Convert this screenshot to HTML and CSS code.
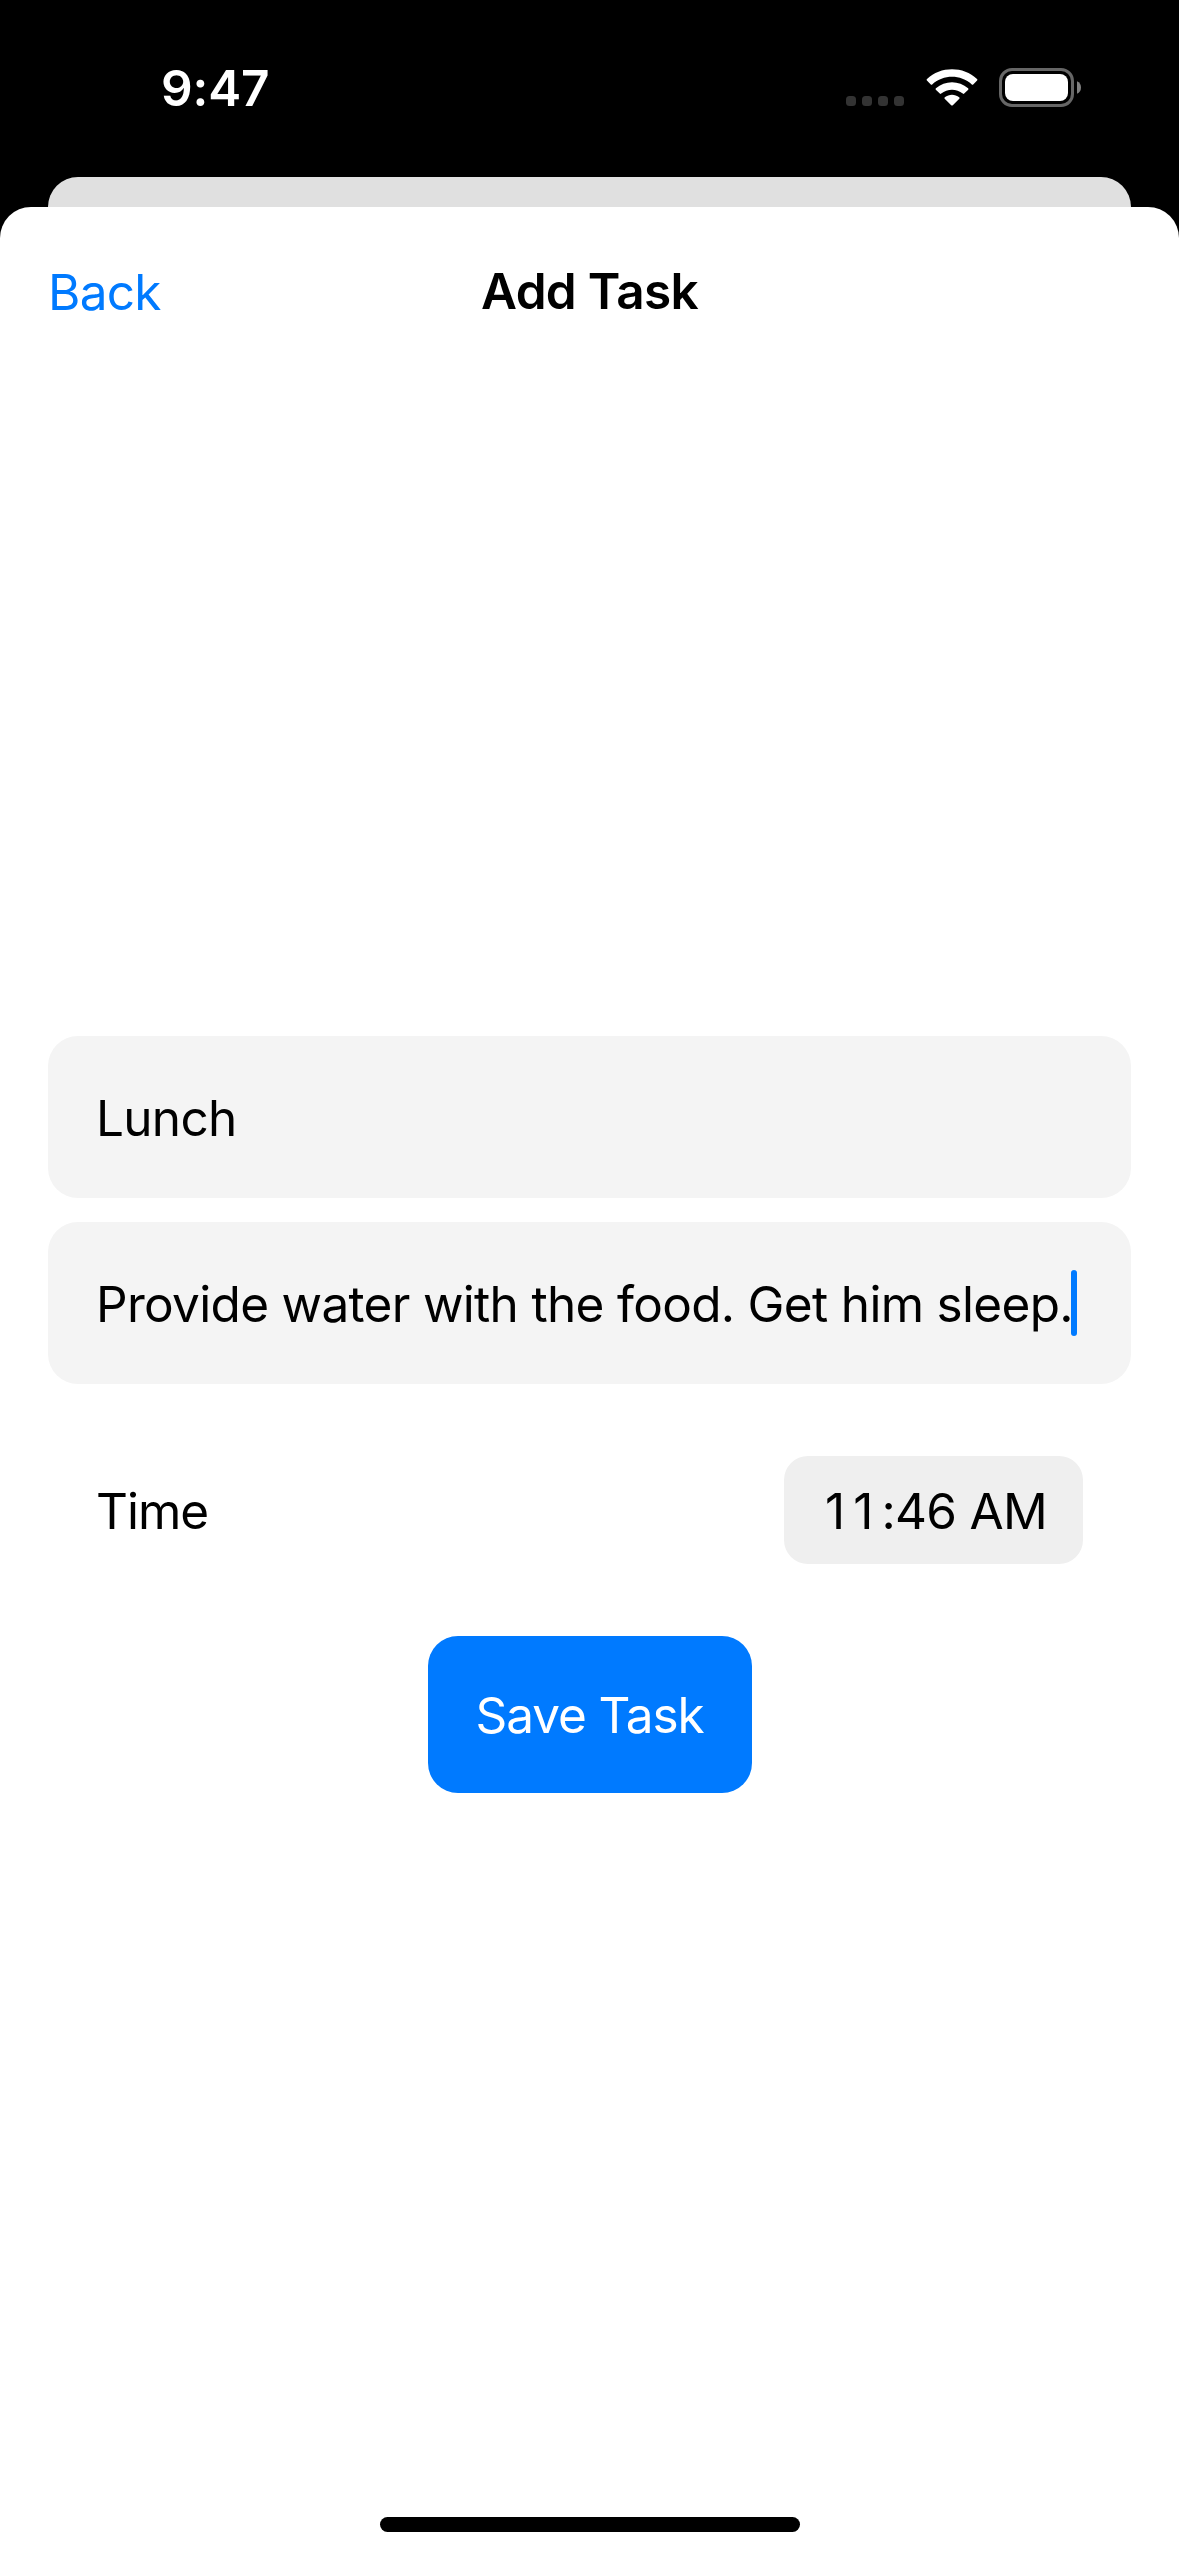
FILE: index.html
```html
<!DOCTYPE html>
<html lang="en">
<head>
<meta charset="utf-8">
<title>Add Task</title>
<link rel="stylesheet" href="styles.css">
</head>
<body>
<div class="screen">
  <header class="status-bar">
    <span class="clock">9:47</span>
    <div class="indicators">
      <svg class="signal" width="58" height="10" viewBox="0 0 58 10" fill="#333">
        <rect width="10" height="10" rx="3.5"/>
        <rect x="16" width="10" height="10" rx="3.5"/>
        <rect x="32" width="10" height="10" rx="3.5"/>
        <rect x="48" width="10" height="10" rx="3.5"/>
      </svg>
      <svg class="wifi" width="52" height="38" viewBox="0 0 52 38" fill="#fff">
        <path d="M.9 11.6Q.2 10.8 1 10C14.500-3.000 37.500-3.000 51 10Q51.800 10.800 51.100 11.600L47.200 15.500Q46.500 16.100 45.800 15.500C34.500 5.300 17.500 5.300 6.200 15.500Q5.500 16.100 4.800 15.500Z"/>
        <path d="M9.800 20.700Q9.200 20 9.900 19.300C19 11.100 33 11.100 42.100 19.300Q42.800 20 42.200 20.700L38.200 24.600Q37.500 25.200 36.800 24.600C30.600 19.300 21.400 19.300 15.200 24.600Q14.500 25.200 13.800 24.600Z"/>
        <path d="M18.700 29.700Q18 29 18.800 28.300C23 24.900 29 24.900 33.200 28.300Q34 29 33.300 29.700L26.800 36.200Q26 37 25.200 36.200Z"/>
      </svg>
      <svg class="battery" width="83" height="39" viewBox="0 0 83 39">
        <rect x="1.500" y="1.500" width="72" height="36" rx="11.500" fill="none" stroke="#666" stroke-width="3"/>
        <rect x="6" y="6" width="63" height="27" rx="8" fill="#fff"/>
        <path d="M78 13.200Q82 15 82 19.500T78 25.800Z" fill="#808080"/>
      </svg>
    </div>
  </header>
  <div class="card-behind"></div>
  <main class="sheet">
    <nav class="nav">
      <span class="back">Back</span>
      <h1 class="title">Add Task</h1>
    </nav>
    <div class="form">
      <div class="field"><span class="name-text">Lunch</span></div>
      <div class="field field-notes"><span class="notes-text">Provide water with the food. Get him sleep.</span><span class="caret"></span></div>
      <div class="time-row">
        <span class="time-label">Time</span>
        <div class="time-pill"><span class="time-value"><span class="wide-digits">11</span>:46 AM</span></div>
      </div>
      <div class="save"><span class="save-text">Save Task</span></div>
    </div>
    <footer class="safe-area"><div class="home-indicator"></div></footer>
  </main>
</div>
</body>
</html>
```
FILE: styles.css
```css
* {
  box-sizing: border-box;
}

body {
  margin: 0;
  background: #000;
  color: #000;
  font-family: Inter, "Liberation Sans", sans-serif;
  font-size: 49.5px;
  line-height: 66px;
  font-optical-sizing: none;
  letter-spacing: -0.7px;
  white-space: nowrap;
}

.screen {
  display: flex;
  flex-direction: column;
  width: 1179px;
  height: 2556px;
  overflow: hidden;
}

.status-bar {
  display: flex;
  justify-content: space-between;
  height: 177px;
  padding: 55px 97px 0 161px;
}

.clock {
  color: #fff;
  font-weight: 600;
  letter-spacing: -0.1px;
}

.indicators {
  display: flex;
  align-items: flex-start;
  padding-top: 13px;
}

.signal {
  margin: 28px 22px 0 0;
}

.wifi {
  margin: 1px 21px 0 0;
}

.card-behind {
  height: 30px;
  margin: 0 48px;
  border-radius: 30px 30px 0 0;
  background: #e0e0e0;
}

.sheet {
  display: flex;
  flex: 1;
  flex-direction: column;
  border-radius: 31px 31px 0 0;
  background: #fff;
}

.nav {
  display: grid;
  grid-template-columns: 1fr auto 1fr;
  align-items: center;
  height: 168px;
  padding: 0 48px;
}

.back {
  padding-top: 2px;
  color: #007aff;
}

.title {
  margin: 0;
  font-size: inherit;
  font-weight: 600;
}

.form {
  display: flex;
  flex: 1;
  flex-direction: column;
  justify-content: center;
  padding: 0 48px;
}

.field {
  display: flex;
  align-items: center;
  height: 162px;
  padding: 0 48px;
  border-radius: 30px;
  background: #f4f4f4;
}

.name-text,
.notes-text {
  padding-top: 2px;
}

.notes-text {
  letter-spacing: -0.68px;
}

.field-notes {
  margin-top: 24px;
}

.caret {
  width: 6px;
  height: 66px;
  margin-left: -2px;
  border-radius: 3px;
  background: #007aff;
}

.time-row {
  display: flex;
  align-items: center;
  justify-content: space-between;
  margin: 72px 0;
  padding: 0 48px;
}

.time-label {
  padding-top: 2px;
  letter-spacing: -1px;
}

.time-pill {
  display: flex;
  align-items: center;
  justify-content: center;
  width: 299px;
  height: 108px;
  border-radius: 24px;
  background: #efefef;
}

.time-value {
  padding: 2px 0 0 5px;
}

.wide-digits {
  letter-spacing: 8px;
}

.save {
  display: flex;
  align-items: center;
  align-self: center;
  justify-content: center;
  width: 324px;
  height: 157px;
  border-radius: 30px;
  background: #007aff;
  color: #fff;
}

.save-text {
  padding-top: 1px;
  letter-spacing: -1.1px;
}

.safe-area {
  display: flex;
  align-items: flex-end;
  justify-content: center;
  height: 102px;
  padding-bottom: 24px;
}

.home-indicator {
  width: 420px;
  height: 15px;
  border-radius: 7.5px;
  background: #000;
}
```
